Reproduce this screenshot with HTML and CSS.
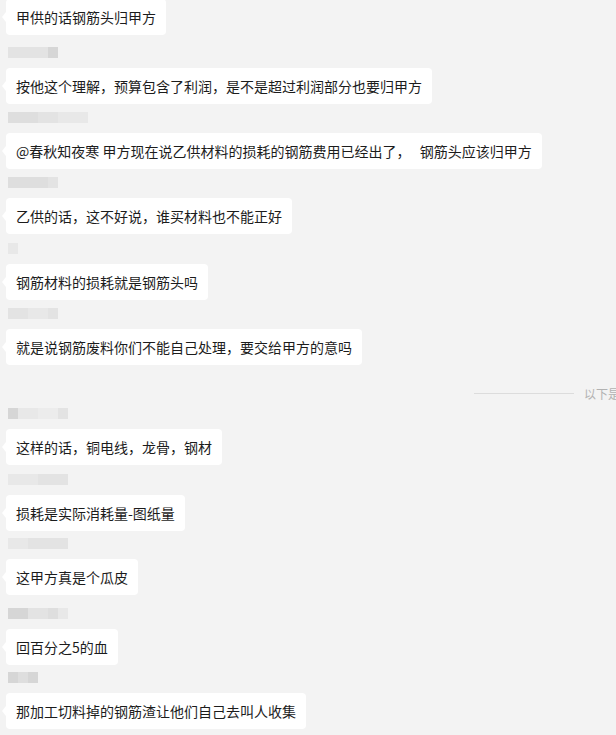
FILE: index.html
```html
<!DOCTYPE html>
<html lang="zh-CN">
<head>
<meta charset="utf-8">
<title>聊天记录</title>
<link rel="stylesheet" href="styles.css">
</head>
<body>
<div class="chat">
  <div class="msg first">
    <div class="bubble">甲供的话钢筋头归甲方</div>
  </div>
  <div class="msg g33">
    <div class="name"><i class="c2 w40"></i><i class="c4 w10"></i></div>
    <div class="bubble">按他这个理解，预算包含了利润，是不是超过利润部分也要归甲方</div>
  </div>
  <div class="msg">
    <div class="name"><i class="c1 w30"></i><i class="c2 w20"></i><i class="c3 w30"></i></div>
    <div class="bubble">@春秋知夜寒 甲方现在说乙供材料的损耗的钢筋费用已经出了，&nbsp;&nbsp;&nbsp;钢筋头应该归甲方</div>
  </div>
  <div class="msg">
    <div class="name"><i class="c1 w40"></i><i class="c2 w10"></i></div>
    <div class="bubble">乙供的话，这不好说，谁买材料也不能正好</div>
  </div>
  <div class="msg g30">
    <div class="name"><i class="c3 w10"></i></div>
    <div class="bubble">钢筋材料的损耗就是钢筋头吗</div>
  </div>
  <div class="msg">
    <div class="name"><i class="c2 w20"></i><i class="c3 w20"></i><i class="c2 w10"></i></div>
    <div class="bubble">就是说钢筋废料你们不能自己处理，要交给甲方的意吗</div>
  </div>
  <div class="divider">
    <span class="line"></span>
    <span class="divider-text">以下是新消息</span>
  </div>
  <div class="msg after-divider">
    <div class="name"><i class="c4 w10"></i><i class="c3 w20"></i><i class="c5 w20"></i><i class="c2 w10"></i></div>
    <div class="bubble">这样的话，铜电线，龙骨，钢材</div>
  </div>
  <div class="msg g30">
    <div class="name"><i class="c3 w30"></i><i class="c2 w30"></i></div>
    <div class="bubble">损耗是实际消耗量-图纸量</div>
  </div>
  <div class="msg g28">
    <div class="name"><i class="c3 w20"></i><i class="c2 w40"></i></div>
    <div class="bubble">这甲方真是个瓜皮</div>
  </div>
  <div class="msg g34">
    <div class="name"><i class="c4 w20"></i><i class="c2 w20"></i><i class="c1 w10"></i><i class="c3 w10"></i></div>
    <div class="bubble">回百分之5的血</div>
  </div>
  <div class="msg g28">
    <div class="name"><i class="c4 w10"></i><i class="c1 w10"></i><i class="c4 w10"></i></div>
    <div class="bubble">那加工切料掉的钢筋渣让他们自己去叫人收集</div>
  </div>
</div>
</body>
</html>
```

FILE: styles.css
```css
html, body {
  margin: 0;
  padding: 0;
  width: 616px;
  height: 735px;
  overflow: hidden;
  background: #f3f3f3;
}

body {
  font-family: "Noto Sans CJK SC", "Microsoft YaHei", sans-serif;
  font-size: 14px;
  color: #1c1c1c;
}

.chat {
  display: flex;
  flex-direction: column;
  align-items: flex-start;
  padding-left: 6px;
}

.msg {
  display: flex;
  flex-direction: column;
  align-items: flex-start;
}

.msg.first {
  margin-top: -1px;
}

.name {
  display: flex;
  height: 11px;
  margin: 8px 0 10px 2px;
}

.msg.g33 .name { margin-top: 12px; }
.msg.g30 .name { margin-top: 9px; }
.msg.g28 .name { margin-top: 7px; }
.msg.g34 .name { margin-top: 13px; }
.msg.after-divider .name { margin-top: 8px; }

.name i {
  display: block;
  height: 100%;
}

.w10 { width: 10px; }
.w20 { width: 20px; }
.w30 { width: 30px; }
.w40 { width: 40px; }

.c1 { background: #dedede; }
.c2 { background: #e3e3e3; }
.c3 { background: #e8e8e8; }
.c4 { background: #d6d6d6; }
.c5 { background: #ececec; }

.bubble {
  position: relative;
  background: #ffffff;
  border-radius: 4px;
  padding: 9px 10px;
  line-height: 18px;
  white-space: nowrap;
}

.bubble::before {
  content: "";
  position: absolute;
  left: -4px;
  top: 50%;
  margin-top: -5px;
  border-style: solid;
  border-width: 5px 4px 5px 0;
  border-color: transparent #ffffff transparent transparent;
}

.divider {
  display: flex;
  align-items: flex-end;
  height: 35px;
  margin-left: 468px;
  gap: 10px;
  white-space: nowrap;
}

.divider .line {
  display: block;
  width: 100px;
  height: 1px;
  background: #dcdcdc;
  margin-bottom: 6px;
}

.divider-text {
  font-size: 12px;
  line-height: 13px;
  color: #b2b2b2;
}
```
